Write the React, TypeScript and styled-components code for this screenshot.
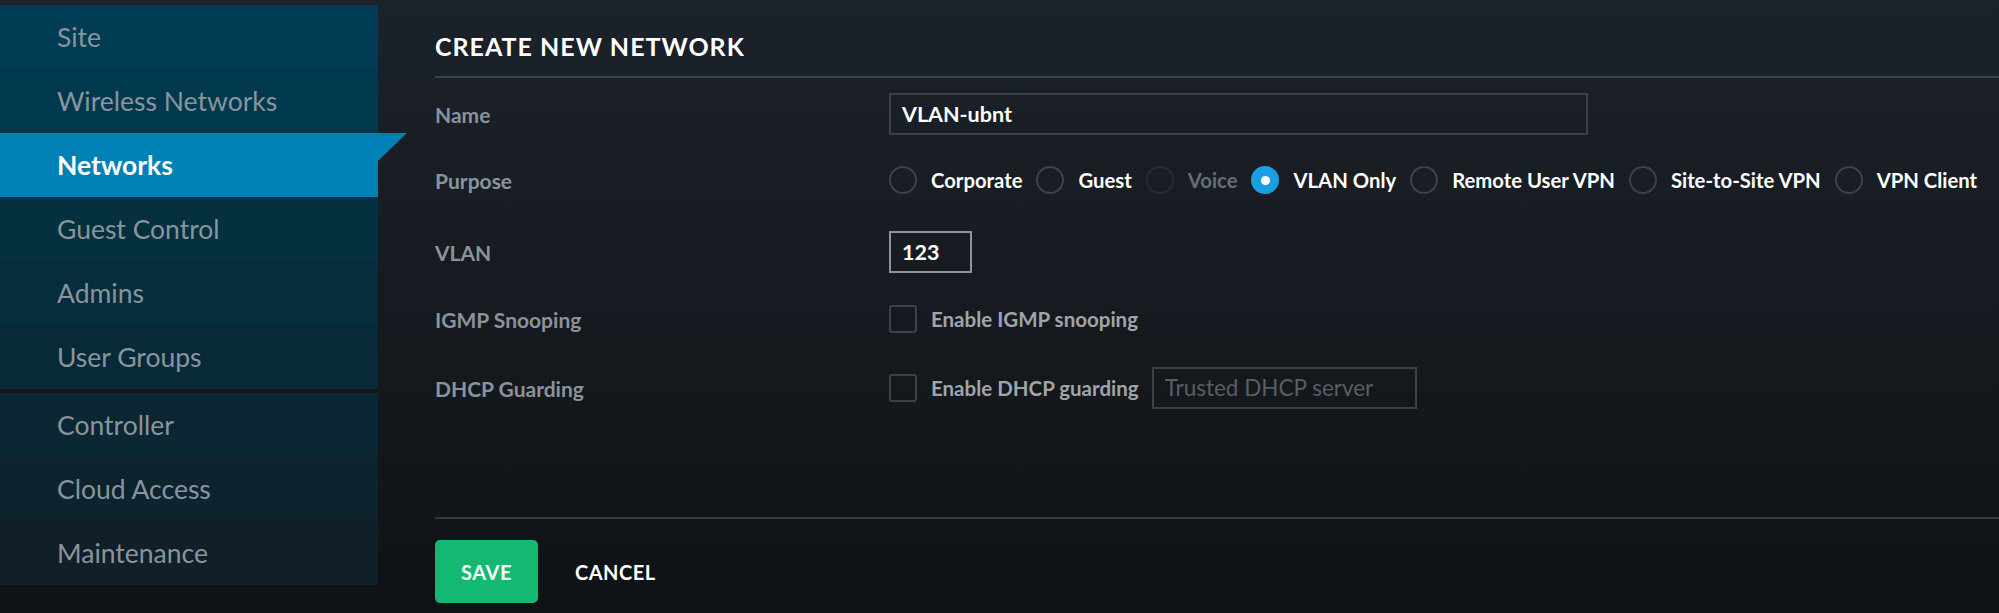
import React from 'react'
import styled, { createGlobalStyle, css } from 'styled-components'

const GlobalStyle = createGlobalStyle`
  html, body {
    margin: 0;
    padding: 0;
  }
  body {
    width: 1999px;
    height: 613px;
    overflow: hidden;
    background: linear-gradient(180deg, #1c222a 0%, #171b21 45%, #0f1215 100%);
    font-family: Lato, "Noto Sans", sans-serif;
  }
`;

const Page = styled.div`
  display: flex;
  height: 613px;
`;

const Sidebar = styled.nav`
  width: 378px;
  flex-shrink: 0;
  padding-top: 5px;
  display: flex;
  flex-direction: column;
  gap: 4px;
`;

const NavGroup = styled.ul`
  list-style: none;
  margin: 0;
  padding: 0;
`;

const NavItem = styled.li<{ $bg: string; $active?: boolean }>`
  position: relative;
  height: 64px;
  display: flex;
  align-items: center;
  padding-left: 57px;
  background: ${p => p.$bg};
  color: ${p => (p.$active ? '#ffffff' : '#8a949c')};
  font-size: 26.5px;
  font-weight: ${p => (p.$active ? 700 : 400)};

  ${p => p.$active && css`
    &::after {
      content: '';
      position: absolute;
      top: 0;
      left: 100%;
      border-top: 28px solid ${p.$bg};
      border-right: 29px solid transparent;
    }
  `}
`;

const Main = styled.main`
  flex: 1;
  padding-left: 57px;
  display: flex;
  flex-direction: column;
`;

const Header = styled.div`
  padding: 31px 0 15px;
  border-bottom: 2px solid #394047;
`;

const Title = styled.h1`
  margin: 0;
  font-size: 25px;
  line-height: 30px;
  font-weight: 700;
  letter-spacing: 1px;
  color: #ffffff;
`;

const Form = styled.div`
  flex: 1;
  padding-top: 15px;
  display: flex;
  flex-direction: column;
`;

const Row = styled.div<{ $gap: number }>`
  display: flex;
  align-items: center;
  height: 42px;
  margin-top: ${p => p.$gap}px;
`;

const Label = styled.div`
  width: 454px;
  flex-shrink: 0;
  padding-top: 1px;
  font-size: 21px;
  font-weight: 700;
  color: #8b939a;
`;

const TextInput = styled.input<{ $width: number; $focused?: boolean }>`
  box-sizing: border-box;
  width: ${p => p.$width}px;
  height: 42px;
  padding: 0 11px;
  background: transparent;
  border: 2px solid ${p => (p.$focused ? '#8e9499' : '#3a4248')};
  outline: none;
  color: #ffffff;
  font-family: Lato, sans-serif;
  font-size: 21.5px;
  font-weight: 700;

  &::placeholder {
    color: #585e64;
    font-weight: 400;
    font-size: 22.5px;
  }
`;

const RadioGroup = styled.div`
  display: flex;
  align-items: center;
  gap: 14px;
`;

const RadioOption = styled.label<{ $disabled?: boolean }>`
  display: flex;
  align-items: center;
  gap: 14px;
  font-size: 20.3px;
  font-weight: 700;
  color: ${p => (p.$disabled ? '#676d73' : '#ffffff')};
`;

const RadioDot = styled.span<{ $checked?: boolean; $disabled?: boolean }>`
  box-sizing: border-box;
  width: 28px;
  height: 28px;
  border-radius: 50%;
  border: 2px solid ${p => (p.$checked ? '#1a9fe3' : p.$disabled ? '#262c32' : '#3a4349')};
  background: ${p => (p.$checked ? '#1a9fe3' : 'transparent')};
  display: flex;
  align-items: center;
  justify-content: center;

  &::after {
    content: '';
    width: 9px;
    height: 9px;
    border-radius: 50%;
    background: #ffffff;
    display: ${p => (p.$checked ? 'block' : 'none')};
  }
`;

const CheckOption = styled.label`
  display: flex;
  align-items: center;
  gap: 14px;
  font-size: 20.5px;
  font-weight: 700;
  color: #a0a5aa;
  margin-right: 13px;
`;

const CheckBox = styled.span`
  box-sizing: border-box;
  width: 28px;
  height: 28px;
  border-radius: 3px;
  border: 2px solid #3a4349;
`;

const Footer = styled.div`
  border-top: 2px solid #353b41;
  padding: 21px 0 10px;
  display: flex;
  align-items: center;
`;

const SaveButton = styled.button`
  width: 103px;
  height: 63px;
  border: none;
  border-radius: 5px;
  background: #13b970;
  color: #ffffff;
  font-family: Lato, sans-serif;
  font-size: 20px;
  font-weight: 700;
  letter-spacing: 0.5px;
  padding: 0;
`;

const CancelButton = styled.button`
  margin-left: 37px;
  border: none;
  background: transparent;
  padding: 0;
  color: #ffffff;
  font-family: Lato, sans-serif;
  font-size: 20px;
  font-weight: 700;
  letter-spacing: 0.5px;
`;

const TOP_NAV = [
  { label: 'Site', bg: '#003c54' },
  { label: 'Wireless Networks', bg: '#00384e' },
  { label: 'Networks', bg: '#0081b5', active: true },
  { label: 'Guest Control', bg: '#04303f' },
  { label: 'Admins', bg: '#062d3c' },
  { label: 'User Groups', bg: '#082a38' },
];

const BOTTOM_NAV = [
  { label: 'Controller', bg: '#0a2733' },
  { label: 'Cloud Access', bg: '#0d232e' },
  { label: 'Maintenance', bg: '#101f28' },
];

const PURPOSES = [
  { label: 'Corporate' },
  { label: 'Guest' },
  { label: 'Voice', disabled: true },
  { label: 'VLAN Only', checked: true },
  { label: 'Remote User VPN' },
  { label: 'Site-to-Site VPN' },
  { label: 'VPN Client' },
];

function App() {
  return (
    <Page>
      <GlobalStyle />
      <Sidebar>
        <NavGroup>
          {TOP_NAV.map(item => (
            <NavItem key={item.label} $bg={item.bg} $active={item.active}>{item.label}</NavItem>
          ))}
        </NavGroup>
        <NavGroup>
          {BOTTOM_NAV.map(item => (
            <NavItem key={item.label} $bg={item.bg}>{item.label}</NavItem>
          ))}
        </NavGroup>
      </Sidebar>

      <Main>
        <Header>
          <Title>CREATE NEW NETWORK</Title>
        </Header>

        <Form>
          <Row $gap={0}>
            <Label>Name</Label>
            <TextInput $width={699} defaultValue="VLAN-ubnt" />
          </Row>
          <Row $gap={24}>
            <Label>Purpose</Label>
            <RadioGroup>
              {PURPOSES.map(p => (
                <RadioOption key={p.label} $disabled={p.disabled}>
                  <RadioDot $checked={p.checked} $disabled={p.disabled} />
                  {p.label}
                </RadioOption>
              ))}
            </RadioGroup>
          </Row>
          <Row $gap={30}>
            <Label>VLAN</Label>
            <TextInput $width={83} $focused defaultValue="123" />
          </Row>
          <Row $gap={25}>
            <Label>IGMP Snooping</Label>
            <CheckOption><CheckBox />Enable IGMP snooping</CheckOption>
          </Row>
          <Row $gap={27}>
            <Label>DHCP Guarding</Label>
            <CheckOption><CheckBox />Enable DHCP guarding</CheckOption>
            <TextInput $width={265} placeholder="Trusted DHCP server" />
          </Row>
        </Form>

        <Footer>
          <SaveButton>SAVE</SaveButton>
          <CancelButton>CANCEL</CancelButton>
        </Footer>
      </Main>
    </Page>
  )
}

export default App
